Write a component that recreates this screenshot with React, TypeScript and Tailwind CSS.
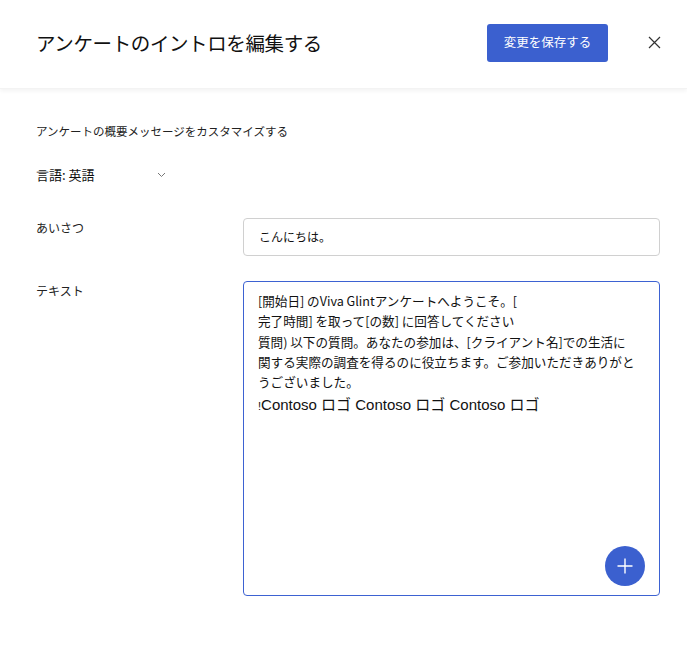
import React from "react";

const jp = { fontFamily: '"Noto Sans CJK JP", "Noto Sans", sans-serif' } as React.CSSProperties;

export default function App() {
  return (
    <div className="w-[687px] h-[661px] bg-white text-[#1b1b1b] overflow-hidden" style={jp}>
      <header className="h-[89px] flex items-center justify-between pl-9 pr-[26px] pb-[3px] shadow-[0_2px_4px_rgba(0,0,0,0.05)] border-b border-[#f3f3f3]">
        <h1 className="text-[19.5px] leading-none tracking-[-0.02em] text-[#111]">アンケートのイントロを編集する</h1>
        <div className="flex items-center">
          <button className="w-[121px] h-[38px] rounded-[3px] bg-[#3b60cf] text-white text-[12.5px] flex items-center justify-center">
            変更を保存する
          </button>
          <button className="ml-[39px] w-[14px] h-[14px] flex items-center justify-center" aria-label="close">
            <svg width="13" height="13" viewBox="0 0 13 13" fill="none">
              <path d="M1 1 L12 12 M12 1 L1 12" stroke="#333" strokeWidth="1.2" />
            </svg>
          </button>
        </div>
      </header>

      <main className="pl-9 pr-[27px] pt-[33px]">
        <p className="text-[11.5px] leading-[18px] text-[#222]">アンケートの概要メッセージをカスタマイズする</p>

        <div className="mt-[26px] flex items-center h-[18px]">
          <span className="text-[13px] leading-[18px] text-[#111]">言語: 英語</span>
          <svg className="ml-[62px]" width="9" height="6" viewBox="0 0 9 6" fill="none">
            <path d="M1 1 L4.5 4.5 L8 1" stroke="#777" strokeWidth="1" />
          </svg>
        </div>

        <div className="mt-[34px] flex">
          <label className="w-[207px] shrink-0 pt-[1px] text-[12px] leading-[18px] text-[#222]">あいさつ</label>
          <div className="flex-1 h-[38px] rounded-[4px] border border-[#d0d0d0] flex items-center pl-[15px] text-[12px] text-[#111]">
            こんにちは。
          </div>
        </div>

        <div className="mt-[25px] flex">
          <label className="w-[207px] shrink-0 pt-[1px] text-[12px] leading-[18px] text-[#222]">テキスト</label>
          <div className="relative flex-1 h-[315px] rounded-[4px] border border-[#3d62d2] pl-[14px] pt-[9px] text-[12.6px] leading-[20.3px] text-[#111] whitespace-nowrap">
            <div>[開始日] のViva Glintアンケートへようこそ。[</div>
            <div>完了時間] を取って[の数] に回答してください</div>
            <div>質問) 以下の質問。あなたの参加は、[クライアント名]での生活に</div>
            <div>関する実際の調査を得るのに役立ちます。ご参加いただきありがと</div>
            <div>うございました。</div>
            <div className="mt-[3px] text-[15px] leading-[19px]" style={{ fontFamily: '"Liberation Sans", "Noto Sans CJK JP", sans-serif' }}>
              <span className="text-[11px]">!</span>Contoso ロゴ Contoso ロゴ Contoso ロゴ
            </div>
            <button
              className="absolute right-[14px] bottom-[9px] w-[40px] h-[40px] rounded-full bg-[#3b60cf] flex items-center justify-center"
              aria-label="add"
            >
              <svg width="16" height="16" viewBox="0 0 16 16" fill="none">
                <path d="M8 0.5 V15.5 M0.5 8 H15.5" stroke="white" strokeWidth="1.4" />
              </svg>
            </button>
          </div>
        </div>
      </main>
    </div>
  );
}
